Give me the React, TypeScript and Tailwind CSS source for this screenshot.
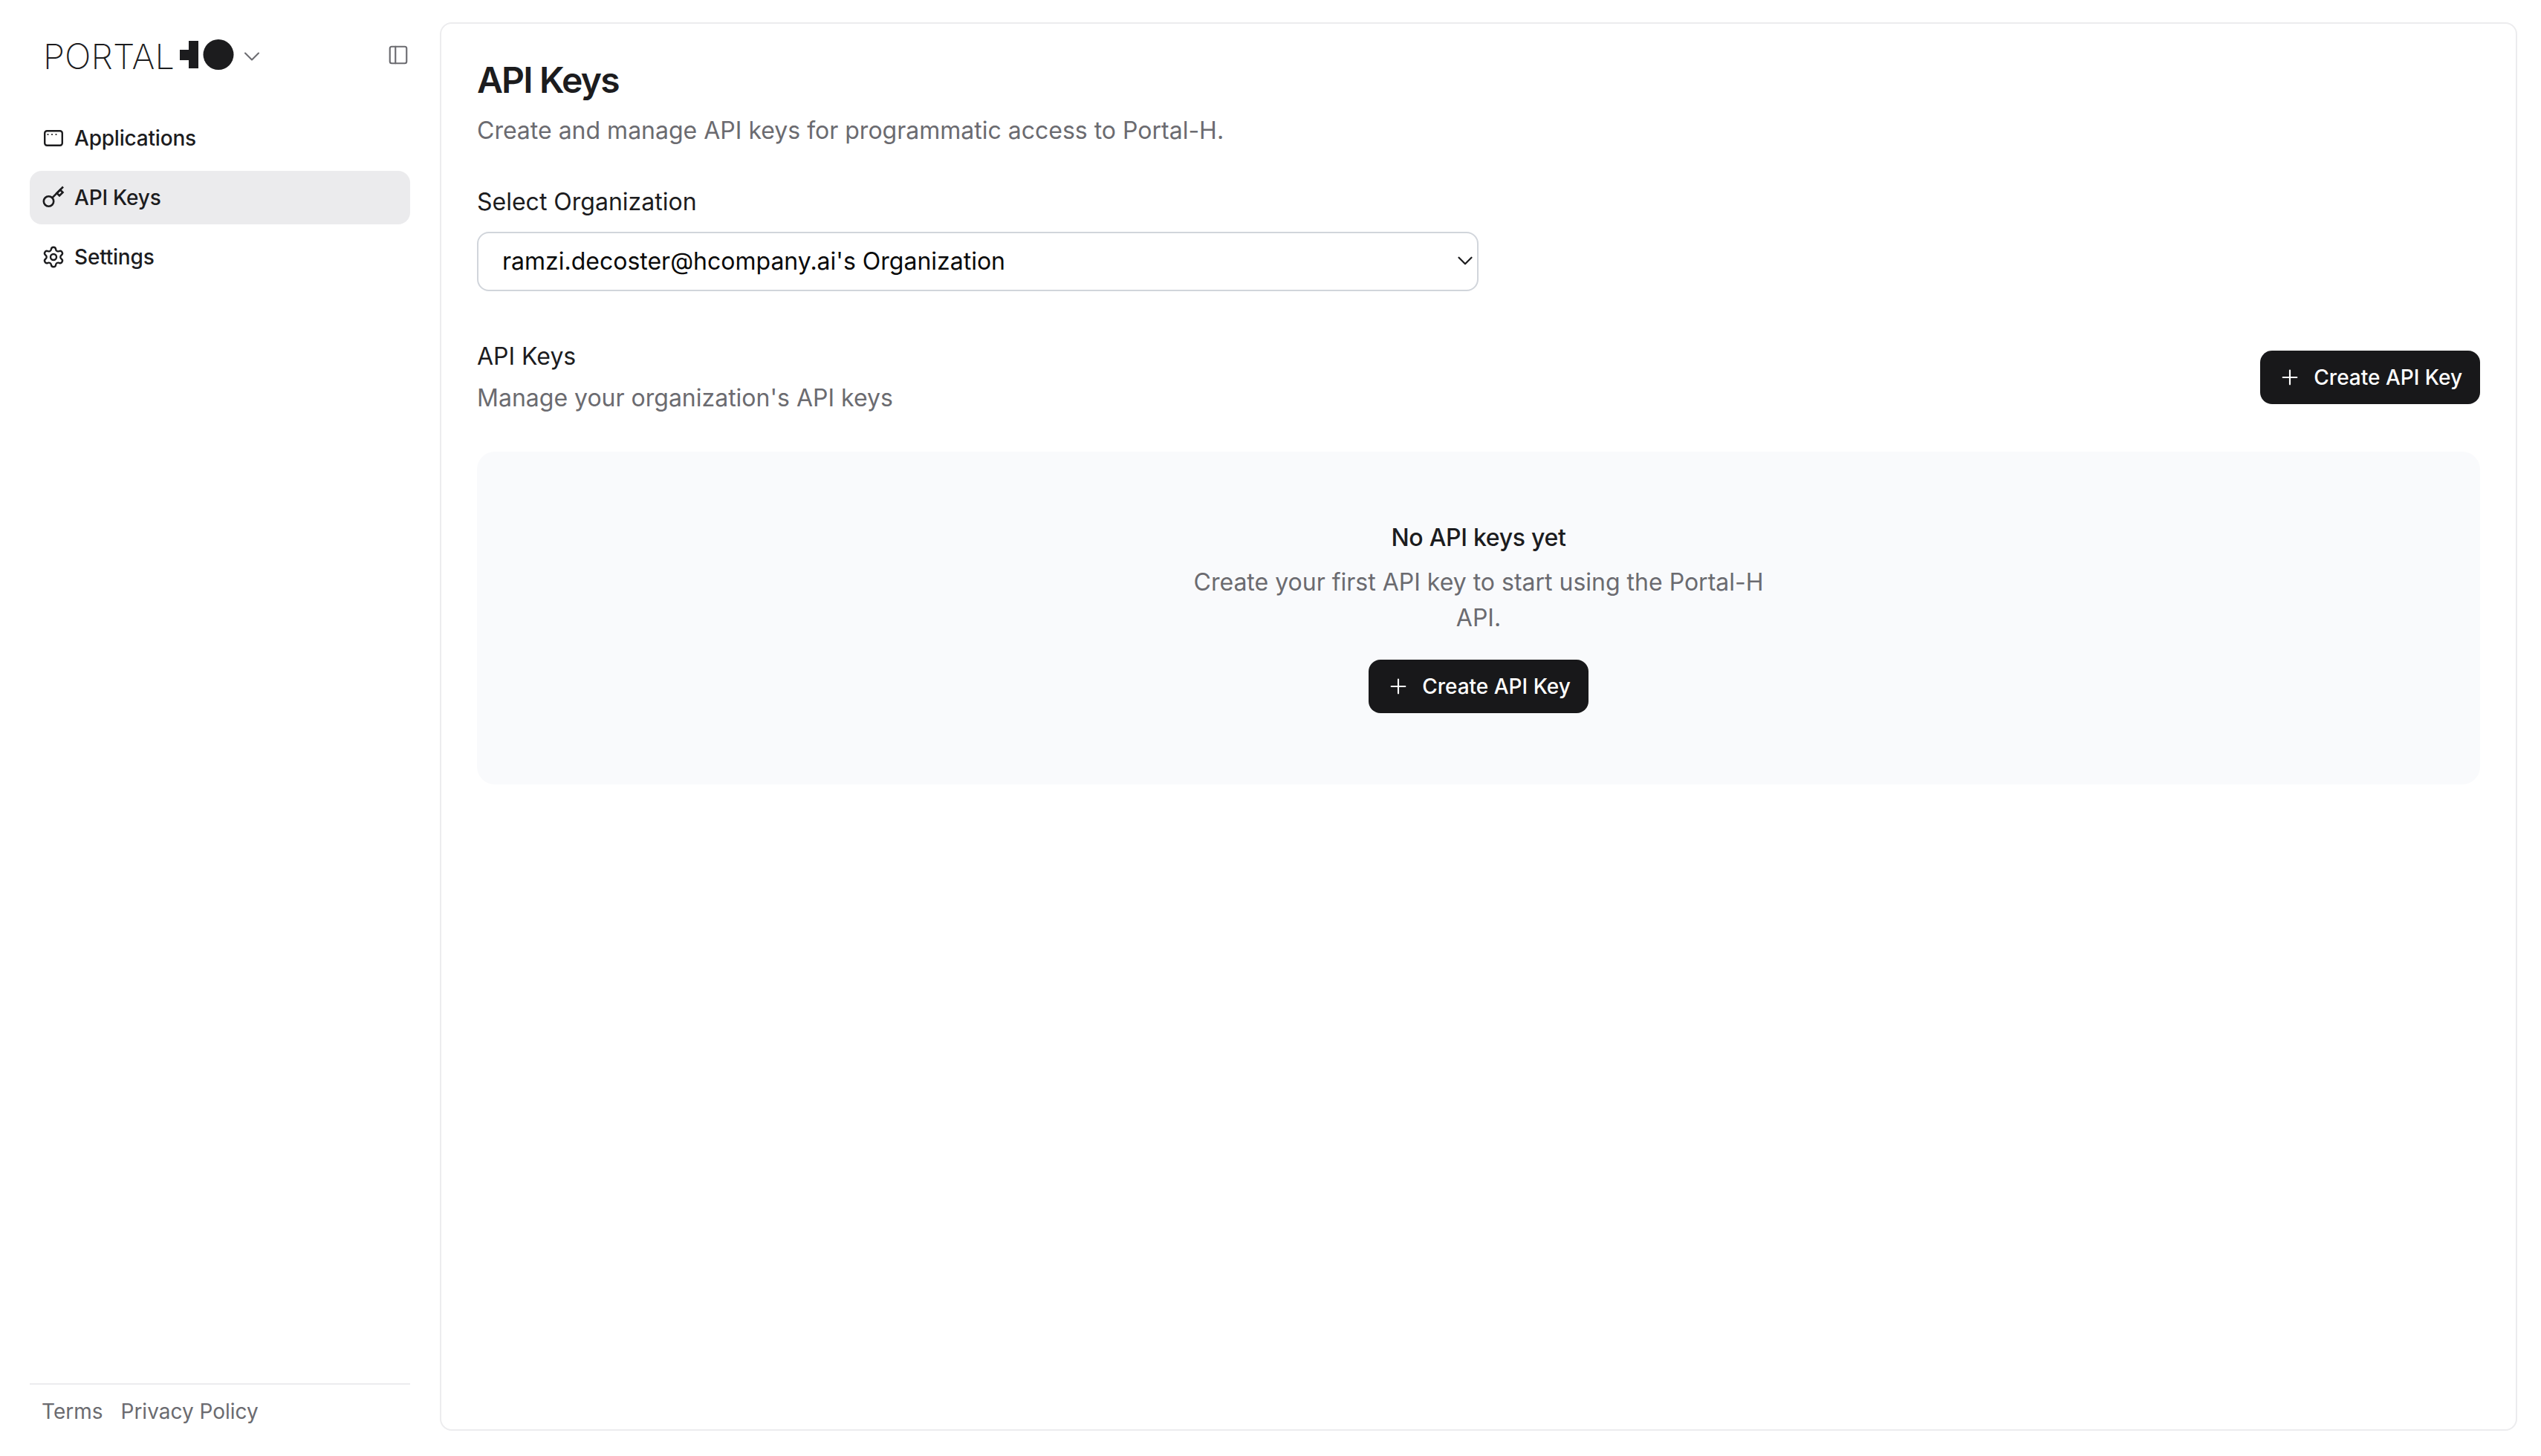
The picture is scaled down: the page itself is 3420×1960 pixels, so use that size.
import { ChevronDown, PanelLeft, Plus, Settings } from 'lucide-react';

const AppIcon = () => (
  <svg width="32" height="32" viewBox="0 0 32 32" fill="none" stroke="currentColor" strokeWidth="2.4">
    <rect x="4.2" y="6.2" width="23.6" height="19.6" rx="3" />
    <circle cx="8.5" cy="11" r="1.1" fill="currentColor" stroke="none" />
    <circle cx="14" cy="11" r="1.1" fill="currentColor" stroke="none" />
    <circle cx="19.5" cy="11" r="1.1" fill="currentColor" stroke="none" />
  </svg>
);

const KeyIcon = () => (
  <svg width="32" height="32" viewBox="0 0 32 32" fill="none" stroke="currentColor" strokeWidth="2.6">
    <circle cx="9.5" cy="21" r="6.7" />
    <path d="M14.2 16.3 29 1.5" />
    <path d="M20.5 10 25 5.5 28.5 9 24 13.5Z" />
  </svg>
);

const Logo = () => (
  <div className="flex items-center h-[48px]">
    <span className="mt-[4px] text-[47px] leading-[48px] font-[250] tracking-[0.1px] text-[#1c1c1e]">PORTAL</span>
    <svg width="76" height="42" viewBox="0 0 76 42" className="ml-[7px]" fill="#1c1c1e">
      <path d="M0 14h12V2h13v37H12V28H0Z" />
      <circle cx="52" cy="20.5" r="20.5" />
    </svg>
  </div>
);

const navItems = [
  { label: 'Applications', icon: <AppIcon />, active: false },
  { label: 'API Keys', icon: <KeyIcon />, active: true },
  { label: 'Settings', icon: <Settings size={32} strokeWidth={1.8} />, active: false },
];

const CreateButton = () => (
  <button className="flex items-center gap-[16px] h-[72px] px-[24px] rounded-[16px] bg-[#18181a] text-white text-[28px] font-medium shrink-0">
    <Plus size={32} strokeWidth={1.6} />
    Create API Key
  </button>
);

export default function App() {
  return (
    <div className="flex w-[3420px] h-[1960px] bg-white font-['Inter',sans-serif] text-[#1c1c1e]">
      <aside className="w-[592px] shrink-0 flex flex-col px-[40px] pt-[50px] pb-[40px]">
        <div className="flex items-center justify-between pl-[18px]">
          <div className="flex items-center gap-[3px]">
            <Logo />
            <ChevronDown size={36} strokeWidth={1.4} className="mt-[3px] text-[#6b6b70]" />
          </div>
          <PanelLeft size={30} strokeWidth={1.7} className="text-[#6b6b70] mr-[1px]" />
        </div>

        <nav className="flex flex-col gap-[8px] mt-[52px]">
          {navItems.map(item => (
            <a
              key={item.label}
              className={`flex items-center gap-[12px] h-[72px] px-[16px] rounded-[16px] text-[28px] font-medium tracking-[-0.2px] ${item.active ? 'bg-[#ebebed]' : ''}`}
            >
              {item.icon}
              {item.label}
            </a>
          ))}
        </nav>

        <footer className="mt-auto border-t-2 border-[#ececee] pt-[16px] pl-[16px] flex gap-[24px] text-[28px] leading-[40px] text-[#6b6b70]">
          <a>Terms</a>
          <a>Privacy Policy</a>
        </footer>
      </aside>

      <main className="flex-1 mt-[30px] mb-[34px] mr-[32px] border-2 border-[#ececee] rounded-[16px] p-[48px] flex flex-col">
        <h1 className="text-[48px] leading-[56px] font-semibold tracking-[-1.8px]">API Keys</h1>
        <p className="mt-[16px] text-[32px] leading-[48px] text-[#6b6b70]">
          Create and manage API keys for programmatic access to Portal-H.
        </p>

        <label className="mt-[48px] text-[32px] leading-[48px] block">Select Organization</label>
        <div className="relative mt-[16px] w-[1348px]">
          <select className="w-full h-[80px] appearance-none bg-white border-2 border-[#d1d5db] rounded-[16px] pl-[32px] pr-[48px] text-[32px] text-[#0a0a0a] outline-none">
            <option>ramzi.decoster@hcompany.ai's Organization</option>
          </select>
          <ChevronDown size={34} strokeWidth={1.6} className="absolute right-[1px] top-[22px] text-[#1c1c1e] pointer-events-none" />
        </div>

        <div className="mt-[64px] flex items-center justify-between">
          <div>
            <h2 className="text-[32px] leading-[48px]">API Keys</h2>
            <p className="mt-[8px] text-[32px] leading-[48px] text-[#6b6b70]">Manage your organization's API keys</p>
          </div>
          <CreateButton />
        </div>

        <section className="mt-[48px] h-[448px] rounded-[24px] bg-[#f9fafc] flex flex-col items-center pt-[92px]">
          <h3 className="text-[32px] leading-[48px] font-medium tracking-[-0.3px]">No API keys yet</h3>
          <p className="mt-[12px] max-w-[784px] text-center text-[32px] leading-[48px] text-[#6b6b70]">
            Create your first API key to start using the Portal-H API.
          </p>
          <div className="mt-[32px]">
            <CreateButton />
          </div>
        </section>
      </main>
    </div>
  );
}
